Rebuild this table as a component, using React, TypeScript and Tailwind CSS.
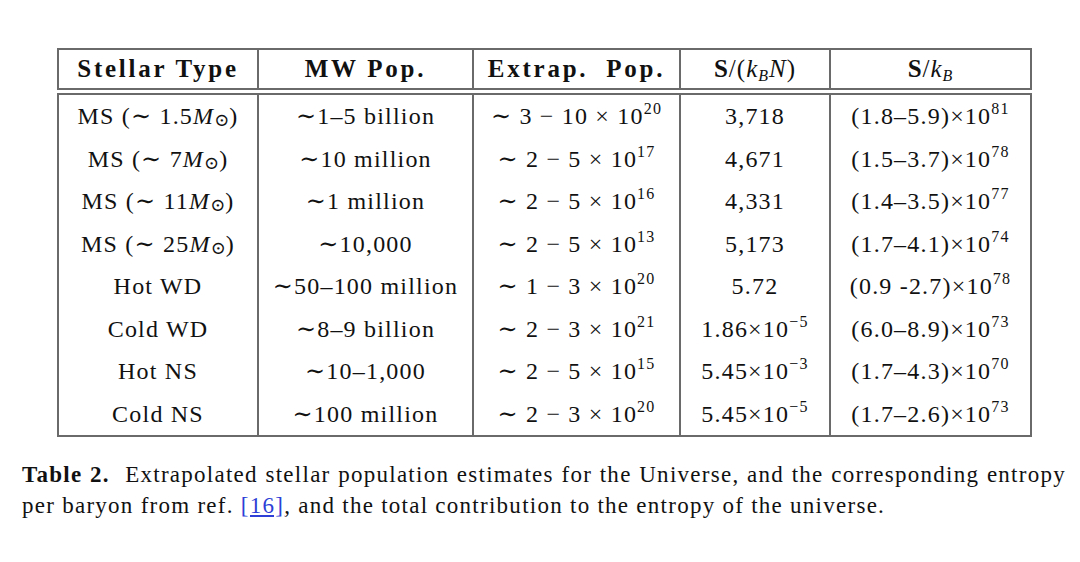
type Row = {
  kind: React.ReactNode;
  mw: string;
  extrap: React.ReactNode;
  perBaryon: React.ReactNode;
  total: React.ReactNode;
};

function Sup({ children }: { children: React.ReactNode }) {
  return <sup className="-top-[7px] text-[16px]">{children}</sup>;
}

function Sun({ mass }: { mass: string }) {
  return (
    <>
      MS (∼ {mass}
      <i>M</i>
      <sub className="-bottom-[4px] text-[18px] tracking-normal">⊙</sub>)
    </>
  );
}

function Range({ lo, hi, exp }: { lo: string; hi: string; exp: string }) {
  return (
    <>
      ∼ {lo} − {hi} × 10<Sup>{exp}</Sup>
    </>
  );
}

function Sci({ mant, exp }: { mant: string; exp: string }) {
  return (
    <>
      {mant}×10<Sup>{exp}</Sup>
    </>
  );
}

const rows: Row[] = [
  { kind: <Sun mass="1.5" />, mw: '∼1–5 billion', extrap: <Range lo="3" hi="10" exp="20" />, perBaryon: '3,718', total: <Sci mant="(1.8–5.9)" exp="81" /> },
  { kind: <Sun mass="7" />, mw: '∼10 million', extrap: <Range lo="2" hi="5" exp="17" />, perBaryon: '4,671', total: <Sci mant="(1.5–3.7)" exp="78" /> },
  { kind: <Sun mass="11" />, mw: '∼1 million', extrap: <Range lo="2" hi="5" exp="16" />, perBaryon: '4,331', total: <Sci mant="(1.4–3.5)" exp="77" /> },
  { kind: <Sun mass="25" />, mw: '∼10,000', extrap: <Range lo="2" hi="5" exp="13" />, perBaryon: '5,173', total: <Sci mant="(1.7–4.1)" exp="74" /> },
  { kind: 'Hot WD', mw: '∼50–100 million', extrap: <Range lo="1" hi="3" exp="20" />, perBaryon: '5.72', total: <Sci mant="(0.9 -2.7)" exp="78" /> },
  { kind: 'Cold WD', mw: '∼8–9 billion', extrap: <Range lo="2" hi="3" exp="21" />, perBaryon: <Sci mant="1.86" exp="−5" />, total: <Sci mant="(6.0–8.9)" exp="73" /> },
  { kind: 'Hot NS', mw: '∼10–1,000', extrap: <Range lo="2" hi="5" exp="15" />, perBaryon: <Sci mant="5.45" exp="−3" />, total: <Sci mant="(1.7–4.3)" exp="70" /> },
  { kind: 'Cold NS', mw: '∼100 million', extrap: <Range lo="2" hi="3" exp="20" />, perBaryon: <Sci mant="5.45" exp="−5" />, total: <Sci mant="(1.7–2.6)" exp="73" /> },
];

const cols = 'grid w-[975px] grid-cols-[198px_215px_207px_150px_201px] border-2 border-[#6a6a6a]';
const cell = 'flex items-center justify-center whitespace-nowrap';
const divider = 'border-l-2 border-[#6a6a6a]';

export default function App() {
  return (
    <div className="h-[562px] w-[1080px] bg-white font-['Liberation_Serif','DejaVu_Serif',serif] text-[#111]">
      <div className="pl-[57px] pt-[48px]">
        {/* header row */}
        <div className={`${cols} text-[25px] font-bold tracking-[0.11em]`}>
          <div className={`${cell} h-[38px]`}>Stellar Type</div>
          <div className={`${cell} ${divider}`}>MW Pop.</div>
          <div className={`${cell} ${divider}`}>Extrap.&nbsp; Pop.</div>
          <div className={`${cell} ${divider} tracking-[0.04em]`}>
            S<span className="font-normal">/(<i>k</i><sub className="text-[16px]"><i>B</i></sub><i>N</i>)</span>
          </div>
          <div className={`${cell} ${divider} tracking-[0.04em]`}>
            S<span className="font-normal">/<i>k</i><sub className="text-[16px]"><i>B</i></sub></span>
          </div>
        </div>

        {/* body rows */}
        <div className={`${cols} mt-[3px] text-[24px] tracking-[0.05em]`}>
          {rows.map((r, i) => (
            <div key={i} className="contents">
              <div className={`${cell} h-[42.5px]`}>{r.kind}</div>
              <div className={`${cell} ${divider}`}>{r.mw}</div>
              <div className={`${cell} ${divider}`}>{r.extrap}</div>
              <div className={`${cell} ${divider}`}>{r.perBaryon}</div>
              <div className={`${cell} ${divider}`}>{r.total}</div>
            </div>
          ))}
        </div>
      </div>

      {/* caption */}
      <div className="mt-[22px] w-[1066px] pl-[22px] text-[23px] leading-[31px] tracking-[0.055em]">
        <p className="text-justify [text-align-last:justify]">
          <b>Table 2.</b>&nbsp; Extrapolated stellar population estimates for the Universe, and the corresponding entropy
        </p>
        <p>
          per baryon from ref. <a className="text-[#2d3fd6] underline">[16]</a>, and the total contribution to the entropy of the universe.
        </p>
      </div>
    </div>
  );
}
